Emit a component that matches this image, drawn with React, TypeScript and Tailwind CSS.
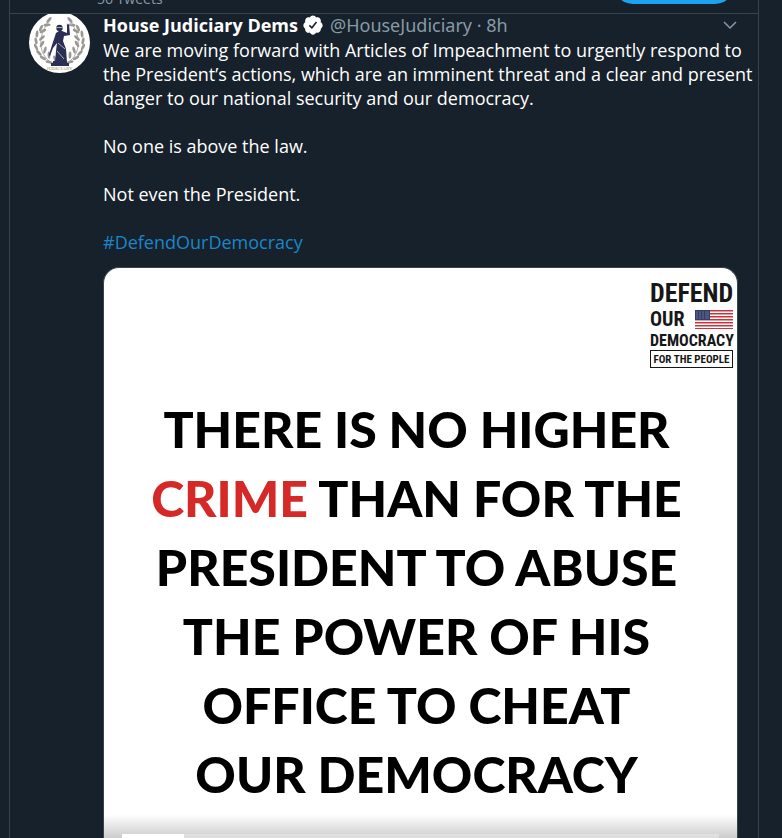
import React from "react";

const leaves = [
  [22, 50, 20], [16, 46, 38], [12, 41, 55], [9, 35, 72], [9, 29, 88], [10, 22, 104], [14, 16, 122],
];

function Laurel() {
  return (
    <g fill="#9a9894">
      <path d="M25 52C10 45 7 26 20 9" fill="none" stroke="#9a9894" strokeWidth="0.800" />
      {leaves.map(([x, y, turn]) => (
        <g key={y}>
          <ellipse cx={x - 2} cy={y} rx="3.600" ry="1.400" transform={`rotate(${turn - 8} ${x - 2} ${y})`} />
          <ellipse cx={x + 4} cy={y - 3} rx="3.600" ry="1.400" transform={`rotate(${turn + 50} ${x + 4} ${y - 3})`} />
        </g>
      ))}
      <ellipse cx="20" cy="8" rx="3.600" ry="1.400" transform="rotate(-50 20 8)" />
    </g>
  );
}

function Avatar() {
  return (
    <svg viewBox="0 0 61 61" className="block h-[61px] w-[61px] rounded-full bg-white" role="img" aria-label="House Judiciary">
      <Laurel />
      <g transform="matrix(-1 0 0 1 61 0)">
        <Laurel />
      </g>
      <g fill="#2b2f54">
        <circle cx="30.500" cy="16" r="3.200" />
        <path d="M27 21l3-2h3l5 2 0-9 2 0 1 11-6 1-1 5 3 8 1 13H26l1-11 1-8-4 5-3 8-1-1 3-10z" />
        <path d="M24 49h14v2h2v3H22v-3h2z" />
      </g>
      <path d="M27.500 15.500h6M37 12h6M29 31l7 6M28 39l7 8" stroke="#c9cad4" strokeWidth="0.800" fill="none" />
      <text x="30.500" y="58" textAnchor="middle" fontSize="5" fill="#9b8e59" fontFamily="Liberation Serif, serif">
        JUDICIARY
      </text>
    </svg>
  );
}

function Verified() {
  return (
    <svg viewBox="0 0 24 24" className="h-[22px] w-[22px] shrink-0" role="img" aria-label="Verified account">
      <path
        fill="#fff"
        d="M22.500 12.500c0-1.580-.875-2.950-2.148-3.600.154-.435.238-.905.238-1.400 0-2.210-1.710-3.998-3.818-3.998-.470 0-.920.084-1.336.250C14.818 2.415 13.510 1.500 12 1.500s-2.816.917-3.437 2.250c-.415-.165-.866-.250-1.336-.250-2.110 0-3.818 1.790-3.818 4 0 .494.083.964.237 1.400-1.272.650-2.147 2.018-2.147 3.600 0 1.495.782 2.798 1.942 3.486-.020.170-.032.340-.032.514 0 2.210 1.708 4 3.818 4 .470 0 .920-.086 1.335-.250.620 1.334 1.926 2.250 3.437 2.250 1.512 0 2.818-.916 3.437-2.250.415.163.865.248 1.336.248 2.110 0 3.818-1.790 3.818-4 0-.174-.012-.344-.033-.513 1.158-.687 1.943-1.990 1.943-3.484z"
      />
      <path d="M8 12.400l2.800 2.700 5-6.400" fill="none" stroke="#17202a" strokeWidth="1.700" />
    </svg>
  );
}

function Flag() {
  return (
    <svg viewBox="0 0 38 19" className="h-[19px] w-[38px]" role="img" aria-label="United States flag">
      <rect width="38" height="19" fill="#fff" />
      {[0, 3, 6, 9, 12, 15, 18].map((y) => (
        <rect key={y} y={y} width="38" height="1.500" fill="#c9343c" />
      ))}
      <rect width="15" height="10" fill="#343d6a" />
      {[2, 4, 6, 8].map((y) =>
        [2, 5, 8, 11, 13].map((x) => <circle key={`${x}-${y}`} cx={x} cy={y} r="0.500" fill="#b9bdcf" />)
      )}
    </svg>
  );
}

function CampaignMark() {
  return (
    <div className="flex w-[83px] flex-col font-['Liberation_Sans_Narrow','Roboto_Condensed','Liberation_Sans',sans-serif] font-bold text-[#171717]">
      <div className="flex h-[28px] items-center text-[26px] leading-none">DEFEND</div>
      <div className="flex h-[24px] items-center justify-between text-[20px] leading-none">
        <span>OUR</span>
        <Flag />
      </div>
      <div className="flex h-[19px] items-center text-[16px] leading-none">DEMOCRACY</div>
      <div className="flex h-[18px] items-center justify-center border border-[#171717] text-[11px] leading-none whitespace-nowrap">
        FOR THE PEOPLE
      </div>
    </div>
  );
}

export default function App() {
  return (
    <div className="h-screen overflow-hidden bg-[#17212b] pr-[23px] pl-[9px] font-['Open_Sans',sans-serif] text-[18px] leading-[24px] text-white">
      <main className="flex h-full flex-col border-x border-[#38444d]">
        <header className="relative z-10 flex h-[14px] shrink-0 items-end justify-between overflow-hidden border-b border-[#38444d] bg-[#17212b] pr-[24px] pl-[87px]">
          <span className="pb-[4px] text-[14px] leading-[20px] text-[#8899a6]">56 Tweets</span>
          <button
            type="button"
            aria-label="Follow"
            className="mb-[9px] h-[38px] w-[120px] shrink-0 rounded-full bg-[#1da1f2]"
          />
        </header>
        <article className="-mt-[2px] flex min-h-0 flex-1 gap-[13px] pr-[20px] pl-[19px]">
          <div className="shrink-0">
            <Avatar />
          </div>
          <div className="flex min-w-0 flex-1 flex-col">
            <div className="flex h-[26px] shrink-0 items-center gap-[6px] whitespace-nowrap">
              <div className="flex items-center gap-[4px]">
                <span className="font-bold">House Judiciary Dems</span>
                <Verified />
              </div>
              <span className="font-['Noto_Sans',sans-serif] text-[#8899a6]">@HouseJudiciary · 8h</span>
              <button type="button" aria-label="More" className="mr-[1px] ml-auto">
                <svg viewBox="0 0 14 9" className="h-[9px] w-[14px]" fill="none" stroke="#8899a6" strokeWidth="1.500">
                  <path d="M1 1l6 6 6-6" />
                </svg>
              </button>
            </div>
            <div className="shrink-0 whitespace-nowrap">
              <p>
                We are moving forward with Articles of Impeachment to urgently respond to
                <br />
                the President’s actions, which are an imminent threat and a clear and present
                <br />
                danger to our national security and our democracy.
              </p>
              <p className="mt-[24px]">No one is above the law.</p>
              <p className="mt-[24px]">Not even the President.</p>
              <p className="mt-[24px]">
                <a href="#DefendOurDemocracy" className="text-[#1b86c9]">
                  #DefendOurDemocracy
                </a>
              </p>
            </div>
            <section className="relative mt-[13px] flex min-h-0 flex-1 flex-col overflow-hidden rounded-t-[16px] border border-b-0 border-[#38444d] bg-white">
              <div className="flex shrink-0 justify-end pt-[11px] pr-[4px]">
                <CampaignMark />
              </div>
              <h1 className="mt-[27px] pr-[8px] text-center font-['Lato',sans-serif] text-[50px] leading-[69px] font-black whitespace-nowrap text-black">
                THERE IS NO HIGHER
                <br />
                <span className="text-[#d42926]">CRIME</span> THAN FOR THE
                <br />
                PRESIDENT TO ABUSE
                <br />
                THE POWER OF HIS
                <br />
                OFFICE TO CHEAT
                <br />
                OUR DEMOCRACY
              </h1>
              <div className="absolute inset-x-0 bottom-0 flex h-[24px] items-end bg-linear-to-b from-transparent to-black/20 px-[18px]">
                <div className="h-[4px] w-full bg-white/30">
                  <div className="h-full w-[62px] bg-white" />
                </div>
              </div>
            </section>
          </div>
        </article>
      </main>
    </div>
  );
}
